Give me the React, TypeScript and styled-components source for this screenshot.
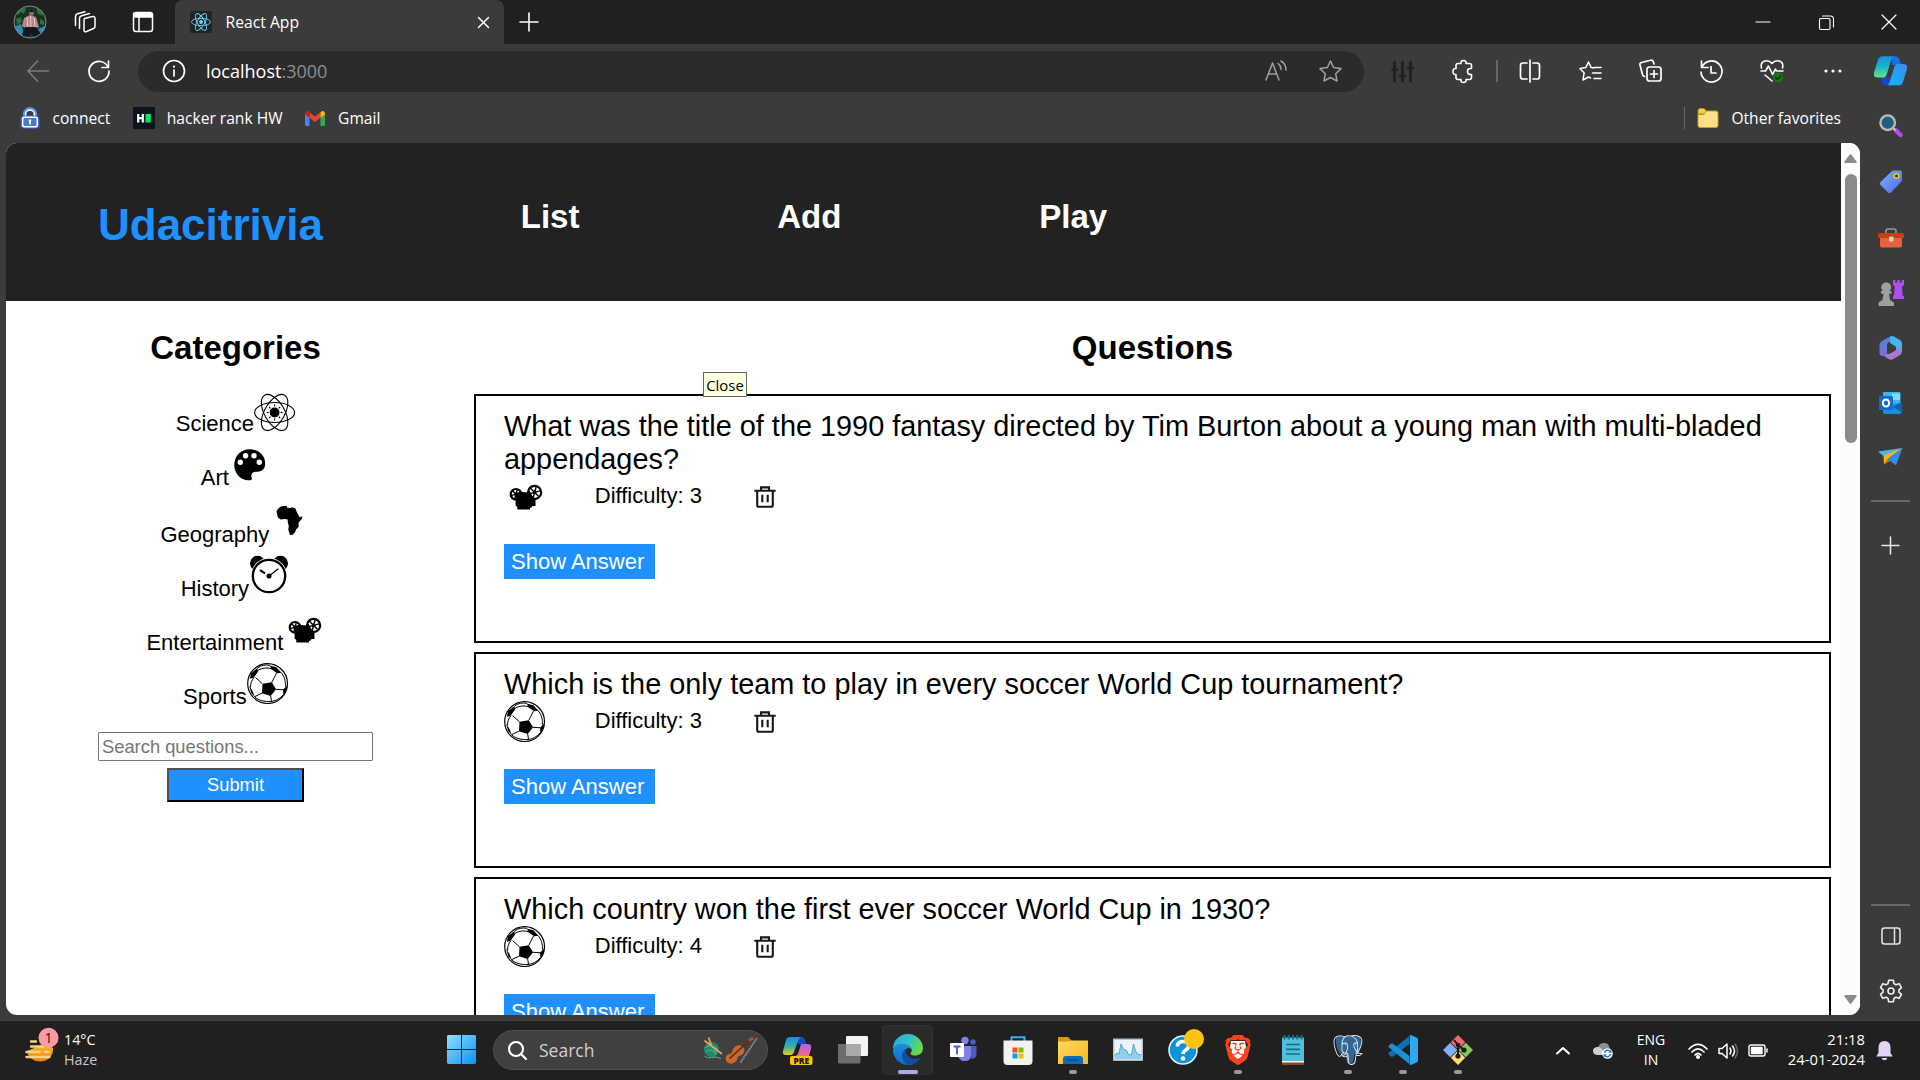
import React from "react";
import styled, { createGlobalStyle } from "styled-components";
import { SiPostgresql, SiBrave } from "react-icons/si";

const GlobalStyle = createGlobalStyle`
  * { box-sizing: border-box; }
  body { margin: 0; background: #3b3b3b; overflow: hidden; }
`;

const ui = `"Open Sans", "Noto Sans", sans-serif`;
const web = `"Liberation Sans", Arial, sans-serif`;

/* ---------- shell ---------- */

const Screen = styled.div`
  width: 1920px;
  height: 1080px;
  display: flex;
  flex-direction: column;
  background: #3b3b3b;
  overflow: hidden;
  font-family: ${ui};
`;

const Slot = styled.div<{ $w: number }>`
  width: ${(p) => p.$w}px;
  flex: none;
  display: flex;
  align-items: center;
  justify-content: center;
`;

const Glyph = styled.svg<{ $w: number; $h?: number }>`
  width: ${(p) => p.$w}px;
  height: ${(p) => p.$h ?? p.$w}px;
  flex: none;
  display: block;
  overflow: visible;
`;

const TitleBar = styled.header`
  height: 44px;
  flex: none;
  display: flex;
  align-items: stretch;
  background: #202020;
`;

const TitleTools = styled.div`
  width: 175px;
  padding-left: 3px;
  display: flex;
  flex: none;
`;

const Tab = styled.div`
  width: 329px;
  flex: none;
  display: flex;
  align-items: center;
  padding: 0 14px 0 15px;
  background: #3b3b3b;
  border-radius: 8px 8px 0 0;
  color: #fff;
  font-size: 15.7px;
`;

const TabTitle = styled.span`
  flex: 1;
  margin-left: 13.5px;
`;

const WindowButtons = styled.div`
  display: flex;
  margin-left: auto;
`;

const Toolbar = styled.div`
  height: 54px;
  flex: none;
  display: flex;
  align-items: center;
  padding-left: 8px;
`;

const AddressBar = styled.div`
  width: 1226px;
  height: 41px;
  margin: 0 8px 0 9px;
  padding: 0 1px 0 2px;
  flex: none;
  display: flex;
  align-items: center;
  background: #2b2b2b;
  border-radius: 21px;
  font-size: 18px;
  color: #fff;
`;

const Url = styled.span`
  flex: 1;
  margin-left: -2px;
  line-height: 24px;
`;

const Port = styled.span`
  color: #8f8f8f;
`;

const Rule = styled.div<{ $w: number; $h: number }>`
  width: ${(p) => p.$w}px;
  height: ${(p) => p.$h}px;
  flex: none;
  background: #686868;
`;

const Middle = styled.div`
  height: 922px;
  flex: none;
  display: flex;
`;

const Content = styled.div`
  width: 1860px;
  flex: none;
`;

const Bookmarks = styled.div`
  height: 45px;
  display: flex;
  align-items: center;
  padding: 0 19px 5px 20px;
  color: #fff;
  font-size: 15.6px;
`;

const Bookmark = styled.div<{ $gap: number; $after: number }>`
  display: flex;
  align-items: center;
  gap: ${(p) => p.$gap}px;
  margin-right: ${(p) => p.$after}px;
  white-space: nowrap;
`;

const OtherFavorites = styled(Bookmark)`
  margin-left: auto;
`;

/* ---------- web page ---------- */

const Viewport = styled.main`
  height: 872px;
  margin-left: 6px;
  display: flex;
  background: #fff;
  border-radius: 11px;
  overflow: hidden;
  position: relative;
  font-family: ${web};
  font-size: 22px;
  color: #000;
`;

const Page = styled.div`
  width: 1835px;
  height: 872px;
  flex: none;
  overflow: hidden;
`;

const PageHeader = styled.div`
  height: 158px;
  display: flex;
  align-items: flex-start;
  gap: 197.8px;
  padding-left: 92px;
  background: #222;
  color: #fff;
`;

const Brand = styled.h1`
  margin: 57px 0 0;
  font-size: 44px;
  line-height: 50px;
  color: #1e90ff;
`;

const NavItem = styled.h2`
  margin: 55px 0 0;
  font-size: 33px;
  line-height: 38px;
`;

const Columns = styled.div`
  display: flex;
`;

const Heading = styled.h2`
  margin: 28px 0 0;
  height: 65px;
  font-size: 33px;
  line-height: 38px;
  text-align: center;
`;

const Side = styled.section`
  width: 275px;
  margin-left: 92px;
  flex: none;
`;

const CategoryRow = styled.div<{ $h: number }>`
  height: ${(p) => p.$h}px;
  display: flex;
  justify-content: center;
  align-items: baseline;
  line-height: 25px;
`;

const CategoryList = styled.div`
  margin-top: -4px;
  height: 338px;
`;

const SearchForm = styled.div`
  display: flex;
  flex-direction: column;
  align-items: center;
  margin-top: 4px;
`;

const SearchInput = styled.input`
  width: 275px;
  height: 29px;
  padding: 1px 3px;
  border: 1px solid #767676;
  border-radius: 1px;
  outline: none;
  font-family: ${web};
  font-size: 18.33px;
  &::placeholder { color: #757575; opacity: 1; }
`;

const SubmitButton = styled.button`
  width: 137px;
  height: 34px;
  margin-top: 7px;
  padding: 0;
  background: #1e90ff;
  border: 2px solid;
  border-color: #505050 #000 #000 #505050;
  color: #fff;
  font-family: ${web};
  font-size: 18.33px;
`;

const Questions = styled.section`
  width: 1357px;
  margin-left: 101px;
  flex: none;
`;

const Card = styled.article`
  margin-bottom: 9px;
  padding: 14px 27px 0 28px;
  border: 2px solid #000;
`;

const QuestionText = styled.div`
  font-size: 28.875px;
  line-height: 33px;
`;

const StatusRow = styled.div`
  height: 41px;
  display: flex;
  align-items: center;
`;

const Difficulty = styled.div`
  width: 159px;
  margin-left: 49.5px;
  padding-bottom: 2px;
  line-height: 25px;
`;

const AnswerArea = styled.div`
  height: 124px;
  padding-top: 27px;
`;

const ShowAnswer = styled.div`
  width: 151px;
  height: 35px;
  padding-left: 7px;
  background: #1e90ff;
  color: #fff;
  line-height: 35px;
  white-space: nowrap;
`;

const ScrollTrack = styled.div`
  width: 19px;
  height: 872px;
  flex: none;
  display: flex;
  flex-direction: column;
  align-items: center;
  padding: 11px 0;
  background: #fcfcfc;
`;

const ScrollThumb = styled.div`
  width: 12px;
  height: 269px;
  margin: 11px 0 auto;
  border-radius: 6px;
  background: #8b8b8b;
`;

const Tooltip = styled.div`
  position: absolute;
  left: 697px;
  top: 229px;
  width: 44px;
  height: 25px;
  padding-top: 1px;
  border: 1px solid #646464;
  background: #ffffe1;
  font-family: ${ui};
  font-size: 14.9px;
  line-height: 22px;
  text-align: center;
`;

/* ---------- side panel ---------- */

const SideBar = styled.aside`
  width: 60px;
  height: 922px;
  padding: 0 0 3px 1px;
  flex: none;
  display: flex;
  flex-direction: column;
  align-items: center;
`;

const SideCell = styled.div<{ $h: number }>`
  height: ${(p) => p.$h}px;
  flex: none;
  display: flex;
  align-items: center;
  justify-content: center;
`;

const SideSpacer = styled.div`
  flex: 1;
`;

/* ---------- taskbar ---------- */

const Taskbar = styled.footer`
  height: 60px;
  flex: none;
  display: flex;
  align-items: stretch;
  background: #202020;
  border-top: 1px solid #424242;
  color: #fff;
`;

const Weather = styled.div`
  width: 434px;
  padding: 12px 0 0 24px;
  flex: none;
  display: flex;
  gap: 8px;
`;

const Lines = styled.div<{ $align?: string; $size?: number; $lift?: number }>`
  display: flex;
  flex-direction: column;
  margin-top: ${(p) => -(p.$lift ?? 0)}px;
  font-size: ${(p) => p.$size ?? 14.3}px;
  line-height: 20px;
  text-align: ${(p) => p.$align ?? "left"};
  white-space: nowrap;
`;

const Dim = styled.span`
  color: #c8c8c8;
`;

const SearchPill = styled.div`
  width: 275px;
  height: 40px;
  margin: 9px 2px 0 4px;
  padding: 0 9px 0 14px;
  flex: none;
  display: flex;
  align-items: center;
  background: #404040;
  border: 1px solid #505050;
  border-radius: 20px;
  color: #d0d0d0;
  font-size: 17.5px;
`;

const PillLabel = styled.span`
  flex: 1;
  margin-left: 12px;
`;

const TaskButton = styled.div<{ $active?: boolean }>`
  width: 51px;
  height: 50px;
  margin: 4px 2px 0;
  padding-top: 10px;
  flex: none;
  display: flex;
  flex-direction: column;
  align-items: center;
  border-radius: 5px;
  background: ${(p) => (p.$active ? "#2a2a2a" : "transparent")};
  box-shadow: ${(p) => (p.$active ? "inset 0 0 0 1px #343434" : "none")};
`;

const RunMark = styled.div<{ $active?: boolean }>`
  width: ${(p) => (p.$active ? 20 : 8)}px;
  height: 4px;
  margin-top: 5px;
  border-radius: 2px;
  background: ${(p) => (p.$active ? "#b4a7e5" : "#9a9a9a")};
`;

const Tray = styled.div`
  margin-left: auto;
  padding-right: 22px;
  display: flex;
  align-items: center;
`;

const TimeBox = styled.div`
  width: 97px;
  padding-right: 5px;
  display: flex;
  justify-content: flex-end;
`;

/* ---------- quiz icons ---------- */

const BOX = "0 0 41.25 41.25";

const Atom = () => (
  <Glyph $w={41.25} viewBox={BOX} fill="none" stroke="#000" strokeWidth="1.1">
    {[0, 60, 120].map((r) => (
      <ellipse key={r} cx="20.6" cy="22.5" rx="20" ry="10" transform={`rotate(${r} 20.6 22.5)`} />
    ))}
    <circle cx="20.6" cy="22.5" r="4.4" fill="#000" />
    {[0, 45, 90, 135, 180, 225, 270, 315].map((r) => (
      <path key={r} d="M20.6 16.6v-2" transform={`rotate(${r} 20.6 22.5)`} />
    ))}
  </Glyph>
);

const Palette = () => (
  <Glyph $w={41.25} viewBox={BOX}>
    <path d="M20.6 5.3C12 5.3 5.3 12 5.3 21c0 8.6 6.3 15.3 14 15.3 2.3 0 3.6-.6 3.6-1.4 0-1.4-1-2.2-.4-4.5.5-2 2.6-2.7 6-2.7 5 0 7.7-3.5 7.7-8.2C36.2 11 29 5.3 20.6 5.3z" />
    <g fill="#fff">
      <circle cx="16.6" cy="11.7" r="2.7" />
      <circle cx="25" cy="11.7" r="2.7" />
      <circle cx="11.3" cy="18.3" r="2.7" />
      <circle cx="30.3" cy="18.3" r="2.7" />
    </g>
  </Glyph>
);

const Africa = () => (
  <Glyph $w={41.25} viewBox={BOX}>
    <path transform="translate(0 .6)" d="M7.5 10l1.5-2.8 2.5-2 3-.8 3.2-.2.5 2 3.3.2 1.300-.8 3.500 1 1.500 3.800 2.200 4.200.7 1 2.700-.9-.5 2.500-3.400 4 .1 4.300-2.600 2.300-.7 2.400-2.500 3-2.900.2-1.600-5.400.5-3.600-.9-3-.3-3.400-2.600-.7-4.200.5-2.900-2z" />
  </Glyph>
);

const Clock = () => (
  <Glyph $w={41.25} viewBox={BOX}>
    <circle cx="8.6" cy="8.3" r="7.6" />
    <circle cx="31.4" cy="8.3" r="7.6" />
    <circle cx="20" cy="21" r="18.1" fill="#fff" />
    <circle cx="20" cy="21" r="16.2" fill="#fff" stroke="#000" strokeWidth="2.3" />
    <circle cx="20" cy="21.1" r="2.5" />
    <path d="M20 21l9.300-7.300" stroke="#000" strokeWidth="1.2" />
    <path d="M11 15.100l5 3.300" stroke="#000" strokeWidth="2.2" />
  </Glyph>
);

const Reel = ({ x, y, r }: { x: number; y: number; r: number }) => (
  <g stroke="#000" fill="#fff">
    <circle cx={x} cy={y} r={r} strokeWidth="2.200" />
    {[0, 60, 120].map((a) => (
      <path key={a} d={`M${x} ${y - r}v${r * 2}`} strokeWidth="1.4" transform={`rotate(${a + 15} ${x} ${y})`} />
    ))}
    <circle cx={x} cy={y} r="1.8" fill="#000" stroke="none" />
  </g>
);

const Projector = () => (
  <Glyph $w={41.25} viewBox={BOX}>
    <Reel x={12} y={18.3} r={5.3} />
    <Reel x={30.6} y={16.4} r={6.6} />
    <path d="M12 17l4-1.200 7 .6 2.500-1.800 2.500 5 3.500 3.200v7.200h-3l-1 1.500-1.500.5v1.500H13.300V31l-1.800-1.500z" />
  </Glyph>
);

const Ball = () => (
  <Glyph $w={41.25} viewBox={BOX} strokeLinejoin="round">
    <circle cx="20.6" cy="20.6" r="19.9" fill="#fff" stroke="#000" strokeWidth="1.2" />
    <path d="M15.500 20.800l9.300-1.500 4.300 7-5.400 6.700-8.700-2.800zM10.500 5l.5 3.800-4.500 6L3 15.800l.8-5.300zM22.800 2.400l6.500 1.800 5.200 5.600-4.300.4-5.600-3.600zM36 26.700l4-4.200-.6 5.500-3 4.200zM2 22.500l3.500 5.500 2.300 5.800-3.500-3.500z" />
    <g fill="none" stroke="#000" strokeWidth="1">
      <path d="M8.500 14.500l7 6.300M24.800 19.300l4.700-9.300M29.100 26.300l7.500.5M23.700 33l.8 5.500M15 30.200L7.300 33.800M11 7.300c4-2.500 9-3 13.700-1.600M34 9.500c3.500 4 4.500 8 4.500 14M7 14.500c-2.500 3-3.500 6-3.500 10M7.500 33.800c4 3.700 10 5 16.500 4.700 4.500-.5 8.500-2.500 12-6.500M10.500 5c3.500-2.500 8-3.700 12.300-2.600" />
    </g>
  </Glyph>
);

const Trash = () => (
  <Glyph $w={22} viewBox="0 0 22 22" fill="none" stroke="#15191e" strokeWidth="2.1">
    <path d="M.3 4.800h21.400M7 4.800V1.400h8v3.400M3.200 5v14.200q0 1.500 1.500 1.500h12.600q1.500 0 1.500-1.500V5M8.300 8.700v7.500M13.700 8.700v7.500" />
  </Glyph>
);

/* ---------- browser icons ---------- */

const Line: React.FC<{ w: number; h?: number; c?: string; sw?: number; d: string; children?: React.ReactNode }> = ({
  w,
  h,
  c = "#fff",
  sw = 1.5,
  d,
  children,
}) => (
  <Glyph $w={w} $h={h} viewBox={`0 0 ${w} ${h ?? w}`} fill="none" stroke={c} strokeWidth={sw} strokeLinecap="round" strokeLinejoin="round">
    <path d={d} />
    {children}
  </Glyph>
);

const Avatar = () => (
  <Glyph $w={34} viewBox="0 0 34 34">
    <defs>
      <clipPath id="face"><circle cx="17" cy="17" r="16" /></clipPath>
    </defs>
    <g clipPath="url(#face)">
      <path fill="#17331f" d="M0 0h34v34H0z" />
      <path fill="#2f6e3d" d="M2 6l5-4 3 3-5 5zM23 3l6 2 1 6-5-2zM3 14l5-2 1 5-5 3zM27 14l4 2v4l-4-1zM10 2l3 2-2 5-3-2z" />
      <path fill="#2b8fb3" d="M0 22l8-3 5 15H0zM25 24l9-4v14H20z" />
      <path fill="#b8848f" d="M11 13l6-3 6 2 3 10-4 2h-9l-4-3z" />
      <path d="M14 12l1 11M17.500 11l.5 12M21 13l1 9" stroke="#e6c9cf" strokeWidth="1" />
      <path fill="#14171f" d="M12 22h11l6 8-6 3-5-5-5 5-4-3z" />
      <ellipse cx="18.500" cy="8" rx="2.400" ry="3" fill="#9b6a59" />
      <path fill="#17130f" d="M16 7q2.500-4.500 5 0z" />
    </g>
    <circle cx="17" cy="17" r="16" fill="none" stroke="#8c8c8c" strokeWidth="1" />
  </Glyph>
);

const ReactFavicon = () => (
  <Glyph $w={22} viewBox="0 0 22 22" fill="none" stroke="#61dafb">
    <rect width="22" height="22" rx="2" fill="#20232a" stroke="none" />
    {[0, 60, 120].map((r) => (
      <ellipse key={r} cx="11" cy="11" rx="9.500" ry="3.700" strokeWidth=".9" transform={`rotate(${r} 11 11)`} />
    ))}
    <circle cx="11" cy="11" r="1.900" fill="#61dafb" stroke="none" />
  </Glyph>
);

const Copilot = () => (
  <Glyph $w={33} $h={29.5} viewBox="0 0 34 30">
    <defs>
      <linearGradient id="ca" x1="0" y1="0" x2="0" y2="1">
        <stop offset="0" stopColor="#1590e0" />
        <stop offset=".5" stopColor="#18b7c4" />
        <stop offset="1" stopColor="#6be08a" />
      </linearGradient>
      <linearGradient id="cb" x1="1" y1="0" x2="0" y2="1">
        <stop offset="0" stopColor="#3f8bef" />
        <stop offset="1" stopColor="#12b5f8" />
      </linearGradient>
    </defs>
    <path fill="#1b6fe0" d="M17 0h5q3 0 4 3l2 6h-9z" />
    <path fill="#1b43cf" d="M17 30h-5q-3 0-4-3l-1-5h10z" />
    <path fill="url(#ca)" d="M9 0h12q-2 0-3 3l-5 16q-1 3-4 3H4q-5 0-4-5L4 4q1-4 5-4z" />
    <path fill="url(#cb)" d="M25 30H13q2 0 3-3l5-16q1-3 4-3h5q5 0 4 5l-4 13q-1 4-5 4z" />
  </Glyph>
);

const Lock = () => (
  <Glyph $w={20} $h={22} viewBox="0 0 20 22">
    <path d="M4.800 10V6.800a5.200 4.800 0 0 1 10.400 0V10" fill="none" stroke="#5a8fe2" strokeWidth="4" />
    <path d="M5.500 10V7a4.500 4 0 0 1 9 0V10" fill="none" stroke="#fff" strokeWidth="1.400" />
    <rect x=".5" y="8.500" width="19" height="13" rx="3.500" fill="#3d67c5" />
    <rect x="2.700" y="10.300" width="14.600" height="9.500" rx="1.500" fill="#4a78d2" stroke="#fff" strokeWidth="1.500" />
    <path d="M10 12.500v5M8.800 13.300h2.400" stroke="#fff" strokeWidth="1.700" />
  </Glyph>
);

const HackerRank = () => (
  <Glyph $w={22} viewBox="0 0 22 22">
    <path fill="#0e141e" d="M0 0h22v22H0z" />
    <path d="M5.200 7v8.500M9.800 7v8.500M5 11.200h5" stroke="#fff" strokeWidth="2.200" />
    <path fill="#00ea64" d="M12.500 7h5.300v8.500h-5.300z" />
  </Glyph>
);

const Gmail = () => (
  <Glyph $w={20} $h={15} viewBox="0 0 20 15">
    <path fill="#4285f4" d="M0 3v10.500q0 1.500 1.500 1.500h3V6z" />
    <path fill="#34a853" d="M20 3v10.500q0 1.500-1.500 1.500h-3V6z" />
    <path fill="#ea4335" d="M4.500 1.200L10 5.500l5.500-4.300v5.500L10 11 4.500 6.700z" />
    <path fill="#c5221f" d="M0 2.500Q0 0 2.200 0q1 0 2.300 1.200v5.500L0 3.500z" />
    <path fill="#fbbc04" d="M20 2.500Q20 0 17.800 0q-1 0-2.300 1.200v5.500L20 3.500z" />
  </Glyph>
);

const Folder = () => (
  <Glyph $w={22} $h={20} viewBox="0 0 21 20">
    <path fill="#f8cf4a" stroke="#b98a12" d="M.5 3q0-2.500 2-2.500h4l2.500 2.500v3H.5z" />
    <path fill="#ffe08a" stroke="#c79a22" d="M.5 6.500h6L9 3h9.500q2 0 2 2v12.500q0 2-2 2h-16q-2 0-2-2z" />
  </Glyph>
);

/* ---------- side panel icons ---------- */

const Magnifier = () => (
  <Glyph $w={24} viewBox="0 0 24 24">
    <path d="M17 16.500l4.500 4.500" stroke="#c044f5" strokeWidth="4.500" strokeLinecap="round" />
    <path d="M13.500 13.500l3 3" stroke="#c9c9c9" strokeWidth="2" />
    <circle cx="8.700" cy="8.700" r="7.300" fill="#1f5f80" stroke="#b9b9b9" strokeWidth="2.400" />
  </Glyph>
);

const Tag = () => (
  <Glyph $w={24} viewBox="0 0 24 24">
    <defs>
      <linearGradient id="tag" x1="0" y1="0" x2="1" y2="1">
        <stop offset="0" stopColor="#7bb4f7" />
        <stop offset="1" stopColor="#5166f0" />
      </linearGradient>
    </defs>
    <path fill="url(#tag)" d="M12.500 1.500q1-1 2.500-1h6q2 0 2 2v7q0 1.500-1 2.500L12 22.500q-1.500 1.500-3 0L1.500 15q-1.500-1.500 0-3z" />
    <circle cx="17.500" cy="6" r="2.300" fill="#3b3b3b" stroke="#f6c915" strokeWidth="1.500" />
  </Glyph>
);

const Toolbox = () => (
  <Glyph $w={26} $h={20} viewBox="0 0 26 20">
    <path d="M8 5V3q0-2 2-2h6q2 0 2 2v2" fill="none" stroke="#999" strokeWidth="1.600" />
    <path fill="#e8613b" d="M2 9h22v8.500q0 2-2 2H4q-2 0-2-2z" />
    <path fill="#c93e12" d="M1.500 5h23q1.500 0 1.500 1.500V10H0V6.500Q0 5 1.500 5z" />
    <rect x="11" y="8.500" width="4.500" height="5" rx="1" fill="#d0d0d0" />
  </Glyph>
);

const Chess = () => (
  <Glyph $w={26} viewBox="0 0 26 26">
    <path fill="#b14bf2" d="M15 0h2.300v2.500h2V0h2.400v2.500h2V0H26v5l-2 1.500.5 8.500 1.500 1.500V19H15v-2.500l1-1.500.8-8.500L15 5z" />
    <path fill="#9f9f9f" d="M8.500 2.500a4.500 4.500 0 0 1 3 8l2 .7v2.500h-2.500l1 6.300 4 2.500V26H.5v-3.500l4-2.500 1-6.300H3v-2.500l2-.7a4.500 4.500 0 0 1 3.500-8z" />
  </Glyph>
);

const M365 = () => (
  <Glyph $w={24} viewBox="0 0 24 24">
    <defs>
      <linearGradient id="ma" x1="0" y1="0" x2="0" y2="1">
        <stop offset="0" stopColor="#4f7fe0" />
        <stop offset="1" stopColor="#7d6fd6" />
      </linearGradient>
    </defs>
    <path fill="#a779cf" d="M23 14q0 4-2 5l-6.500 4q-2.500 1.300-5 0L4 19.500q-2-1-2-3l8 1.500 7-4V8l6 3z" />
    <path fill="url(#ma)" d="M12 0Q6 3 2.500 5.500.5 6.500.5 9v8q0 3 3.500 3 4-.5 4-5V9q0-2 2-3l4-2.300z" />
    <path fill="#45b6ea" d="M12 0q1.500-.3 3 .5l6 3.500q2 1 2 3.500V16q-.5-2-2.500-3L12 8q-3-3.500 0-8z" />
    <path fill="#3b3b3b" d="M8.500 9.500L12 7.700l4 2.300v4.500l-4 2.300-3.500-2z" />
  </Glyph>
);

const Outlook = () => (
  <Glyph $w={23} $h={22} viewBox="0 0 23 22">
    <path fill="#35b8f1" d="M5 0h15q1.500 0 1.500 1.500V12H4V1Q4 0 5 0z" />
    <path fill="#7fdcf9" d="M13 1.500h8V8h-8z" />
    <path fill="#1490df" d="M4 13l18.500-2v9q0 2-2 2H6q-2 0-2-2z" />
    <path fill="#0b62ae" d="M14 15l8.500-5v10z" />
    <rect y="4" width="14" height="14" rx="1.500" fill="#0f6cce" />
    <ellipse cx="7" cy="11" rx="3.200" ry="3.600" fill="none" stroke="#fff" strokeWidth="2" />
  </Glyph>
);

const Plane = () => (
  <Glyph $w={25} $h={18} viewBox="0 0 25 18">
    <path fill="#49b5f2" d="M0 3.500L24.500 0 6 8.500z" />
    <path fill="#f4b31a" d="M24.500 0L5.500 7.500 6 16.500l3.500-5z" />
    <path fill="#318ee6" d="M24.500 0l-15 11L18 17.500z" />
    <path fill="#c97f10" d="M6 16.500l3.500-5.500 2.500 2z" />
  </Glyph>
);

const gearPath = Array.from({ length: 12 }, (_, i) => {
  const at = (deg: number, r: number) => {
    const a = (deg * Math.PI) / 180;
    return `${(12 + r * Math.sin(a)).toFixed(2)} ${(12 - r * Math.cos(a)).toFixed(2)}`;
  };
  const tooth = i % 2 === 0;
  return `${i ? "L" : "M"}${at(i * 30 - (tooth ? 12 : 8), tooth ? 11 : 8)}L${at(i * 30 + (tooth ? 12 : 8), tooth ? 11 : 8)}`;
}).join("") + "z";

const Gear = () => (
  <Line w={24} d={gearPath} c="#f0f0f0" sw={1.6}>
    <circle cx="12" cy="12" r="3" />
  </Line>
);

/* ---------- taskbar icons ---------- */

const Haze = () => (
  <Glyph $w={32} $h={32} viewBox="0 0 32 32">
    <defs>
      <linearGradient id="sun" x1="0" y1="0" x2="0" y2="1">
        <stop offset="0" stopColor="#fbc02d" />
        <stop offset="1" stopColor="#f07c16" />
      </linearGradient>
    </defs>
    <path fill="url(#sun)" d="M3 18a13 12 0 0 0 26-3L22 10z" />
    <path d="M7 8.500h5M7 13.500h12M2.500 19h13M21 19h4M2.500 24h23" stroke="#f2d284" strokeWidth="2.400" strokeLinecap="round" />
    <circle cx="24.500" cy="4.700" r="10" fill="#ff99a4" />
    <text x="24.500" y="9.700" fontSize="14" textAnchor="middle" fill="#202020">1</text>
  </Glyph>
);

const Windows = () => (
  <Glyph $w={29} viewBox="0 0 29 29">
    <defs>
      <linearGradient id="win" x1="0" y1="0" x2="1" y2="1">
        <stop offset="0" stopColor="#8fe0fc" />
        <stop offset="1" stopColor="#0a92f8" />
      </linearGradient>
    </defs>
    <path fill="url(#win)" d="M1 0h13v14H0V1zM15 0h13l1 1v13H15zM0 15h14v14H1l-1-1zM15 15h14v13l-1 1H15z" />
  </Glyph>
);

const SearchArt = () => (
  <Glyph $w={55} $h={28} viewBox="0 0 55 28">
    <circle cx="8.500" cy="13.500" r="7.500" fill="#25876c" />
    <path d="M2 12q6-5 12 1M2 16q6-5 11 2M5 8q7 3 8 11M1.500 20q3 3 7 1.500t9.500 1" fill="none" stroke="#57b294" />
    <path d="M1.500 4.500L19 18M5.500 1.500l3 8" stroke="#e5a35b" strokeWidth="1.700" />
    <path d="M35 13L47 3.500" stroke="#6e3216" strokeWidth="2.200" />
    <path d="M46 4.500l4-2.500" stroke="#a8572a" strokeWidth="3" />
    <path fill="#c7692b" d="M23 20.500q1.500-2.500 4-2.700 2-.3 2.300-2.300.2-3 3-5 4-2.500 7.500 0 3 3 .5 7-1.500 2-3.500 2.200-2.300.2-2.300 2.500-.3 3-3.500 4.800-4 1.500-6.500-.5-2.800-2.700-1.500-6z" />
    <path d="M26.500 22.500L42 8.500" stroke="#5b2710" strokeWidth="1.500" />
    <path d="M37.500 26.500L54 2" stroke="#9a8599" strokeWidth="1.800" strokeDasharray="2 .6" />
  </Glyph>
);

const CopilotPre = () => (
  <Glyph $w={30} viewBox="0 0 30 30">
    <defs>
      <linearGradient id="pa" x1="0" y1="0" x2="0" y2="1">
        <stop offset="0" stopColor="#168ee8" />
        <stop offset=".55" stopColor="#38b39c" />
        <stop offset="1" stopColor="#f6cd18" />
      </linearGradient>
      <linearGradient id="pb" x1="0" y1="0" x2="0" y2="1">
        <stop offset="0" stopColor="#a462f5" />
        <stop offset="1" stopColor="#fa6c78" />
      </linearGradient>
    </defs>
    <path fill="#1b49b5" d="M13 2h5q3 0 4 3l1 4h-8z" />
    <path fill="url(#pa)" d="M7 2h11q-2 1-3 4l-4 11q-1 3-4 3H3q-4 0-3-4L3 5q1-3 4-3z" />
    <path fill="url(#pb)" d="M18 9h7q4 0 3 5l-2 7H13q2-1 3-5z" />
    <rect x="7" y="21" width="22.500" height="9" rx="2" fill="#fbc412" />
    <text x="18.300" y="28.500" fontSize="8.500" fontWeight="800" textAnchor="middle" fill="#1d1d1d">PRE</text>
  </Glyph>
);

const TaskView = () => (
  <Glyph $w={30} viewBox="0 0 30 30">
    <rect x="8" y="1" width="22" height="20" rx="1" fill="#f3f3f3" />
    <rect x="0" y="9" width="22.500" height="19.500" rx="1" fill="#6c6c6c" />
    <path fill="#a9a9a9" d="M8 9h14.500v12H8z" />
  </Glyph>
);

const Edge = () => (
  <Glyph $w={30} viewBox="0 0 30 30">
    <defs>
      <linearGradient id="ea" x1="0" y1="0" x2="1" y2=".4">
        <stop offset="0" stopColor="#2aa7e0" />
        <stop offset=".55" stopColor="#2fc3c7" />
        <stop offset="1" stopColor="#65d84e" />
      </linearGradient>
      <linearGradient id="eb" x1="0" y1="0" x2="0" y2="1">
        <stop offset="0" stopColor="#1a8fdc" />
        <stop offset="1" stopColor="#0b6cc9" />
      </linearGradient>
    </defs>
    <path fill="url(#ea)" d="M0 14A15 14.500 0 0 1 30 13q0 7-7 7.500-5 .2-5.500-2 2-2 1-4.500-2-4-8-4.500T0 14z" />
    <path fill="url(#eb)" d="M0 15q1-6 8-6.300 8-.2 10.500 5-3-1.500-5.500.3-3.500 4-1 9t8 6.500Q10 31.500 4 25q-4-4.500-4-10z" />
    <path fill="#10509e" d="M13 14q-4 1.500-4 7 .5 6 7 9 8-.5 11.800-7.500-4.300 2.300-9 1-6.300-2-5.800-9.500z" />
  </Glyph>
);

const Teams = () => (
  <Glyph $w={28} $h={30} viewBox="0 0 28 30">
    <circle cx="24" cy="7" r="2.800" fill="#5059c9" />
    <circle cx="16" cy="5.500" r="3.700" fill="#7b83eb" />
    <path fill="#5059c9" d="M20 11h7.500v7.500q0 5-5 5.500z" />
    <path fill="#7b83eb" d="M9 11h13v9q0 6-6 6t-7-6z" />
    <rect x="1" y="8" width="14" height="14" rx="1" fill="#fff" />
    <path d="M4.500 11.500h7M8 11.500v8" stroke="#5059c9" strokeWidth="1.900" />
  </Glyph>
);

const Store = () => (
  <Glyph $w={30} viewBox="0 0 30 30">
    <path d="M8.500 7V2.200h13V7" fill="none" stroke="#2cb5ef" strokeWidth="2" />
    <path fill="#f1f1f1" d="M.5 5.500h29V26q0 4-4 4h-21q-4 0-4-4z" />
    <path fill="#f25022" d="M9.500 12.500h5v5h-5z" />
    <path fill="#7fba00" d="M15.500 12.500h5v5h-5z" />
    <path fill="#00a4ef" d="M9.500 18.500h5v5h-5z" />
    <path fill="#ffb900" d="M15.500 18.500h5v5h-5z" />
  </Glyph>
);

const Explorer = () => (
  <Glyph $w={30} viewBox="0 0 30 30">
    <defs>
      <linearGradient id="fold" x1="0" y1="0" x2="1" y2="1">
        <stop offset="0" stopColor="#ffd968" />
        <stop offset="1" stopColor="#f8b41c" />
      </linearGradient>
    </defs>
    <path fill="#d99a08" d="M0 2h10l3 3v5H0z" />
    <path fill="url(#fold)" d="M0 6.500h10.500L13 5.500h17V29H0z" />
    <path fill="#0f6cbd" d="M5 29v-5q0-3 3-3h14q3 0 3 3v5z" />
    <path d="M9 25h12" stroke="#084a86" strokeWidth="1.500" />
  </Glyph>
);

const Monitor = () => (
  <Glyph $w={30} viewBox="0 0 30 30">
    <rect x=".7" y="4.200" width="28.600" height="21" fill="#edf2f6" stroke="#b5c1cd" strokeWidth="1.400" />
    <path fill="#93cdf1" d="M1.500 20.500L4 18l2 1 2-10 2.500 5 3 1.500 2 4 3 .5 2-11 2 7 2 3 4 1v4H1.500z" />
    <path d="M1.500 20.500L4 18l2 1 2-10 2.500 5 3 1.500 2 4 3 .5 2-11 2 7 2 3 4 1" fill="none" stroke="#3f91cc" strokeWidth=".8" />
  </Glyph>
);

const Help = () => (
  <Glyph $w={30} viewBox="0 0 30 30">
    <circle cx="15" cy="15" r="14" fill="#0d93d8" stroke="#eaf4fa" strokeWidth="1.500" />
    <path d="M9.500 11.500q0-5 5.500-5t5.500 4.500q0 2.500-3 4.300-2.300 1.500-2.500 3.700" fill="none" stroke="#fff" strokeWidth="3.600" />
    <circle cx="15" cy="23.500" r="2.300" fill="#fff" />
    <circle cx="26" cy="4" r="10" fill="#ffc20e" />
  </Glyph>
);

const Brave = () => (
  <Glyph $w={30} viewBox="0 0 30 30">
    <path fill="#fff" d="M8 6h14l1 6-3 10-5 4-5-4-3-10z" />
    <SiBrave size={30} color="#f9431a" />
  </Glyph>
);

const Notepad = () => (
  <Glyph $w={30} viewBox="0 0 30 30">
    <path fill="#8a4a1c" d="M4 27h22v3H4z" />
    <path fill="#f4f4f4" d="M4 25h22v2.500H4z" />
    <path fill="#4fc0d8" d="M4 2.500h22V26H4z" />
    <path d="M8 9.500h14M8 14.300h14M8 19h14" stroke="#136e8a" strokeWidth="1.700" />
    <path d="M6.500 0v4.500M10.700 0v4.500M15 0v4.500M19.300 0v4.500M23.500 0v4.500" stroke="#136e8a" strokeWidth="2" />
  </Glyph>
);

const Postgres = () => (
  <Glyph $w={30} viewBox="0 0 30 30">
    <path fill="#336791" d="M3 2q5-2 12-.5Q23 0 27 3q2.500 5-2 13l2 1.500-6 2q.5 9-4 9.500-4 0-4-9L8 20Q2 13 3 2z" />
    <SiPostgresql size={30} color="#e3edf4" />
  </Glyph>
);

const VSCode = () => (
  <Glyph $w={30} viewBox="0 0 30 30">
    <path fill="#0f6fb0" d="M.8 19.500q-1-.8 0-1.700L21.500.7V9L5 21.500q-1 .6-2 0z" />
    <path fill="#1c8fd6" d="M.8 10.500L3 8.700q1-.5 2 0L21.500 21v8.300L.8 12.200q-1-.9 0-1.700z" />
    <path fill="#2fa8f2" d="M21.500.4q.8-.6 2-.2l5.500 2.600q1 .5 1 1.700v21q0 1.200-1 1.700l-5.500 2.600q-1.200.4-2-.2.500-.5.500-1.500V2q0-1-.5-1.600z" />
  </Glyph>
);

const GitBash = () => (
  <Glyph $w={30} viewBox="0 0 30 30">
    <path fill="#f1696e" d="M15 0l7.200 7.200L15 14.400 7.800 7.200z" />
    <path fill="#7fb0ff" d="M7.200 7.800l7.200 7.200-7.200 7.200L0 15z" />
    <path fill="#80cc5c" d="M22.800 7.800L30 15l-7.200 7.200-7.200-7.200z" />
    <path fill="#ffdb74" d="M15 15.600l7.200 7.200L15 30l-7.200-7.200z" />
    <path d="M11 5l4 5v11M15 10l6 5" fill="none" stroke="#211a16" strokeWidth="2" />
    <g fill="#211a16">
      <circle cx="15" cy="10" r="2.300" />
      <circle cx="15" cy="21" r="2.600" />
      <circle cx="21" cy="15" r="2.600" />
    </g>
  </Glyph>
);

const OneDrive = () => (
  <Glyph $w={20} $h={17} viewBox="0 0 20 17">
    <path fill="#8e8e8e" d="M5 6q1-5 6-5t5.500 5l2 3-8 4z" />
    <path fill="#cfcfcf" d="M4 13q-4-.5-4-4t4-4q3-.5 5 2l4 6z" />
    <circle cx="14.500" cy="11.500" r="5.300" fill="#fff" />
    <path d="M11.500 10.800a3.200 3.200 0 0 1 5.700-1.300M17.500 12.200a3.200 3.200 0 0 1-5.700 1.300" fill="none" stroke="#1f7fd0" strokeWidth="1.600" />
    <path fill="#1f7fd0" d="M18.500 7.500v3.300h-3.300zM10.500 15.500v-3.300h3.300z" />
  </Glyph>
);

const Bell = () => (
  <Glyph $w={17} $h={20} viewBox="0 0 17 20">
    <path fill="#e2d4f4" d="M8.500 0q6 0 6 7v5l2.300 3.500H.2L2.500 12V7q0-7 6-7zM5.500 17h6q-1 2.300-3 2.300t-3-2.300z" />
  </Glyph>
);

/* ---------- data ---------- */

const categories = [
  { name: "Science", icon: <Atom />, h: 54 },
  { name: "Art", icon: <Palette />, h: 57 },
  { name: "Geography", icon: <Africa />, h: 53.5 },
  { name: "History", icon: <Clock />, h: 54 },
  { name: "Entertainment", icon: <Projector />, h: 54 },
  { name: "Sports", icon: <Ball />, h: 54 },
];

const questions = [
  {
    text: "What was the title of the 1990 fantasy directed by Tim Burton about a young man with multi-bladed appendages?",
    icon: <Projector />,
    difficulty: 3,
  },
  { text: "Which is the only team to play in every soccer World Cup tournament?", icon: <Ball />, difficulty: 3 },
  { text: "Which country won the first ever soccer World Cup in 1930?", icon: <Ball />, difficulty: 4 },
];

const sideApps = [
  { icon: <Magnifier />, h: 55 },
  { icon: <Tag />, h: 57 },
  { icon: <Toolbox />, h: 55 },
  { icon: <Chess />, h: 55 },
  { icon: <M365 />, h: 55 },
  { icon: <Outlook />, h: 55 },
  { icon: <Plane />, h: 54 },
];

const taskApps: { icon: React.ReactNode; run?: boolean; active?: boolean }[] = [
  { icon: <CopilotPre /> },
  { icon: <TaskView /> },
  { icon: <Edge />, run: true, active: true },
  { icon: <Teams /> },
  { icon: <Store /> },
  { icon: <Explorer />, run: true },
  { icon: <Monitor /> },
  { icon: <Help /> },
  { icon: <Brave />, run: true },
  { icon: <Notepad /> },
  { icon: <Postgres />, run: true },
  { icon: <VSCode />, run: true },
  { icon: <GitBash />, run: true },
];

const starPath = "M11.500 1l3.200 6.600 7.300 1-5.300 5.100 1.300 7.300-6.500-3.500L5 21l1.300-7.300L1 8.600l7.300-1z";

export default function App() {
  return (
    <Screen>
      <GlobalStyle />
      <TitleBar>
        <TitleTools>
          <Slot $w={54}><Avatar /></Slot>
          <Slot $w={56}>
            <Line w={24} d="M11.500 8.500l8-2q2.500-.5 2.500 2v8q0 1.500-1.500 2l-7 3q-2.500 1-2.500-1.500V11q0-2 .5-2.500zM6.500 18.500V8.500q0-2 2-2.700l8-2.300M2.500 15.500v-9q0-2 2-2.700l7.500-2" />
          </Slot>
          <Slot $w={59}>
            <Line w={22} d="M4 1.500h14q2.500 0 2.500 2.500v14q0 2.500-2.500 2.500H4q-2.500 0-2.500-2.500V4q0-2.500 2.500-2.500zM7 6v14">
              <path d="M2 6h18V3.500L18 2H4L2 3.500z" fill="#fff" />
            </Line>
          </Slot>
        </TitleTools>
        <Tab>
          <ReactFavicon />
          <TabTitle>React App</TabTitle>
          <Line w={13} d="M1.500 1.500l10 10M11.500 1.500l-10 10" />
        </Tab>
        <Slot $w={49}><Line w={20} d="M10 1v18M1 10h18" sw={1.6} /></Slot>
        <WindowButtons>
          <Slot $w={63}><Line w={14} d="M0 7h14" sw={1.2} /></Slot>
          <Slot $w={64}><Line w={15} d="M2 3.500h7.500q1.500 0 1.500 1.500v8q0 1.500-1.500 1.500H2Q.5 14.500.5 13V5Q.5 3.500 2 3.500zM3.500 1h8q3 0 3 3v8" sw={1.1} /></Slot>
          <Slot $w={62}><Line w={14} d="M0 0l14 14M14 0L0 14" sw={1.2} /></Slot>
        </WindowButtons>
      </TitleBar>

      <Toolbar>
        <Slot $w={60}><Line w={22} c="#7d7d7d" d="M10.500 1L1 11l9.500 10M1 11h20.500" /></Slot>
        <Slot $w={61}><Line w={22} d="M20 7A10 10 0 1 0 21 11M20.500 1v6.500H14" sw={1.7} /></Slot>
        <AddressBar>
          <Slot $w={68}>
            <Line w={24} d="M12 11v6" sw={1.7}>
              <circle cx="12" cy="12" r="10.500" />
              <path d="M12 7.500v.2" strokeWidth="2.200" />
            </Line>
          </Slot>
          <Url>localhost<Port>:3000</Port></Url>
          <Slot $w={42}>
            <Line w={22} c="#a0a0a0" d="M1 20L7.500 3 14 20M3.300 14h8.500M13 3.500q3 2 3 6M16 1q5 3 5 9" />
          </Slot>
          <Slot $w={66}><Line w={23} c="#a0a0a0" d={starPath} /></Slot>
        </AddressBar>
        <Slot $w={60}>
          <Line w={23} c="#222" sw={3} d="M3.500 2v19M11.500 2v19M19.500 2v19M1.500 9.500h4M9.500 16h4M17.500 8h4" />
        </Slot>
        <Slot $w={62}>
          <Line w={22} d="M6 3.500h3q-.5-3 2.500-3t2.500 3h3.500q2 0 2 2v3q-4-.5-4 3t4 3v3q0 2-2 2H14q.5 3-2.500 3t-2.500-3H6q-2 0-2-2v-3q-3 .5-3-3t3-3v-3q0-2 2-2z" sw={1.6} />
        </Slot>
        <Slot $w={6}><Rule $w={2} $h={22} /></Slot>
        <Slot $w={60}>
          <Line w={22} d="M11 0v22M8 3H4Q1.500 3 1.500 5.500v11Q1.500 19 4 19h4M14 3h4q2.500 0 2.500 2.500v11q0 2.500-2.500 2.500h-4" sw={1.7} />
        </Slot>
        <Slot $w={61}>
          <Line w={23} d="M14.500 8l-2.300-.4L9.500 2 6.800 7.600.8 8.500l4.300 4.300L4 20l5.500-3 2 1M15 7.500h7M13.500 13H22M15 18.500h7" />
        </Slot>
        <Slot $w={60}>
          <Line w={24} d="M10.500 8h9q2.500 0 2.500 2.500v9q0 2.500-2.500 2.500h-9Q8 22 8 19.500v-9Q8 8 10.500 8zM15 11.500v7M11.500 15h7M5.500 17.500q-1.500-.3-2-2L1 6q-.5-2 1.500-2.500l9-2.300q2-.5 2.700 1.300l.8 2.500" sw={1.7} />
        </Slot>
        <Slot $w={60}>
          <Line w={23} d="M2 7A10.500 10.500 0 1 1 1 12M1.500 1v6.500H8M11 6.500V13h5" sw={1.7} />
        </Slot>
        <Slot $w={61}>
          <Line w={24} d="M1.500 9Q0 3.500 5 2q4-1 7 2.500Q15 1 19 2q5 1.500 3.500 7M1 12h4.500l3-5 4 8.500 3-5.500 1 2H23M5 16l7 6" sw={1.6}>
            <circle cx="18" cy="18.500" r="5" fill="#127a12" stroke="none" />
            <path d="M15.500 18.500l2 2 3.200-3.700" stroke="#062f06" strokeWidth="1.200" />
          </Line>
        </Slot>
        <Slot $w={61}>
          <Glyph $w={18} $h={4} viewBox="0 0 18 4" fill="#fff">
            <circle cx="2" cy="2" r="1.600" /><circle cx="9" cy="2" r="1.600" /><circle cx="16" cy="2" r="1.600" />
          </Glyph>
        </Slot>
        <Slot $w={55}><Copilot /></Slot>
      </Toolbar>

      <Middle>
        <Content>
          <Bookmarks>
            <Bookmark $gap={12.5} $after={22.5}><Lock />connect</Bookmark>
            <Bookmark $gap={12} $after={22.5}><HackerRank />hacker rank HW</Bookmark>
            <Bookmark $gap={13} $after={0}><Gmail />Gmail</Bookmark>
            <OtherFavorites $gap={11} $after={0}>
              <Rule $w={1} $h={22} />
              <Slot $w={24}><Folder /></Slot>
              Other favorites
            </OtherFavorites>
          </Bookmarks>

          <Viewport>
            <Page>
              <PageHeader>
                <Brand>Udacitrivia</Brand>
                <NavItem>List</NavItem>
                <NavItem>Add</NavItem>
                <NavItem>Play</NavItem>
              </PageHeader>
              <Columns>
                <Side>
                  <Heading>Categories</Heading>
                  <CategoryList>
                    {categories.map((c) => (
                      <CategoryRow key={c.name} $h={c.h}>
                        {c.name}
                        {c.icon}
                      </CategoryRow>
                    ))}
                  </CategoryList>
                  <SearchForm>
                    <SearchInput placeholder="Search questions..." />
                    <SubmitButton>Submit</SubmitButton>
                  </SearchForm>
                </Side>
                <Questions>
                  <Heading>Questions</Heading>
                  {questions.map((q) => (
                    <Card key={q.text}>
                      <QuestionText>{q.text}</QuestionText>
                      <StatusRow>
                        {q.icon}
                        <Difficulty>Difficulty: {q.difficulty}</Difficulty>
                        <Trash />
                      </StatusRow>
                      <AnswerArea>
                        <ShowAnswer>Show Answer</ShowAnswer>
                      </AnswerArea>
                    </Card>
                  ))}
                </Questions>
              </Columns>
            </Page>
            <ScrollTrack>
              <Glyph $w={13} $h={9} viewBox="0 0 13 9"><path fill="#8b8b8b" d="M5.500.8q1-1.200 2 0l5 6.700q.7 1.500-1 1.500h-10q-1.700 0-1-1.500z" /></Glyph>
              <ScrollThumb />
              <Glyph $w={13} $h={9} viewBox="0 0 13 9"><path fill="#8b8b8b" d="M5.500 8.200q1 1.200 2 0l5-6.700Q13.200 0 11.500 0h-10Q-.2 0 .5 1.500z" /></Glyph>
            </ScrollTrack>
            <Tooltip>Close</Tooltip>
          </Viewport>
        </Content>

        <SideBar>
          {sideApps.map((a, i) => (
            <SideCell key={i} $h={a.h}>{a.icon}</SideCell>
          ))}
          <SideCell $h={33}><Rule $w={39} $h={2} /></SideCell>
          <SideCell $h={56}><Line w={17} d="M8.500 0v17M0 8.500h17" c="#e8e8e8" /></SideCell>
          <SideSpacer />
          <Rule $w={39} $h={2} />
          <SideCell $h={59}>
            <Line w={20} h={18} d="M3.500 1h13Q19 1 19 3.500v11q0 2.500-2.500 2.500h-13Q1 17 1 14.500v-11Q1 1 3.500 1zM13.500 1v16" c="#e8e8e8" />
          </SideCell>
          <SideCell $h={52}><Gear /></SideCell>
        </SideBar>
      </Middle>

      <Taskbar>
        <Weather>
          <Haze />
          <Lines $lift={3.5}><span>14°C</span><Dim>Haze</Dim></Lines>
        </Weather>
        <TaskButton><Windows /></TaskButton>
        <SearchPill>
          <Line w={19} d="M13.500 13.500L18 18" sw={2.2}><circle cx="8" cy="8" r="7" /></Line>
          <PillLabel>Search</PillLabel>
          <SearchArt />
        </SearchPill>
        {taskApps.map((t, i) => (
          <TaskButton key={i} $active={t.active}>
            {t.icon}
            {t.run && <RunMark $active={t.active} />}
          </TaskButton>
        ))}
        <Tray>
          <Slot $w={48}><Line w={14} h={7} d="M1 6.500L7 1l6 5.500" sw={2} /></Slot>
          <Slot $w={32}><OneDrive /></Slot>
          <Slot $w={64}><Lines $align="center" $size={14} $lift={1}><span>ENG</span><span>IN</span></Lines></Slot>
          <Slot $w={30}>
            <Line w={20} h={16} d="M1 6q9-9 18 0M4 9q6-6 12 0M7 12q3-3 6 0" sw={1.7}>
              <circle cx="10" cy="14" r="1.200" fill="#fff" />
            </Line>
          </Slot>
          <Slot $w={29}>
            <Line w={20} h={16} d="M1 5.500h3L9 1v14l-5-4.500H1zM12 5q2 3 0 6" sw={1.5}>
              <path d="M14.500 3q4 5 0 10" />
              <path d="M17 1q5 7 0 14" stroke="#666" />
            </Line>
          </Slot>
          <Slot $w={31}>
            <Line w={20} h={13} d="M3 1h12q2 0 2 2v7q0 2-2 2H3q-2 0-2-2V3q0-2 2-2zM19 5v3" sw={1.4}>
              <rect x="3.500" y="3.500" width="10.500" height="6" fill="#fff" />
            </Line>
          </Slot>
          <TimeBox><Lines $align="right" $size={14.8} $lift={4}><span>21:18</span><span>24-01-2024</span></Lines></TimeBox>
          <Slot $w={28}><Bell /></Slot>
        </Tray>
      </Taskbar>
    </Screen>
  );
}
